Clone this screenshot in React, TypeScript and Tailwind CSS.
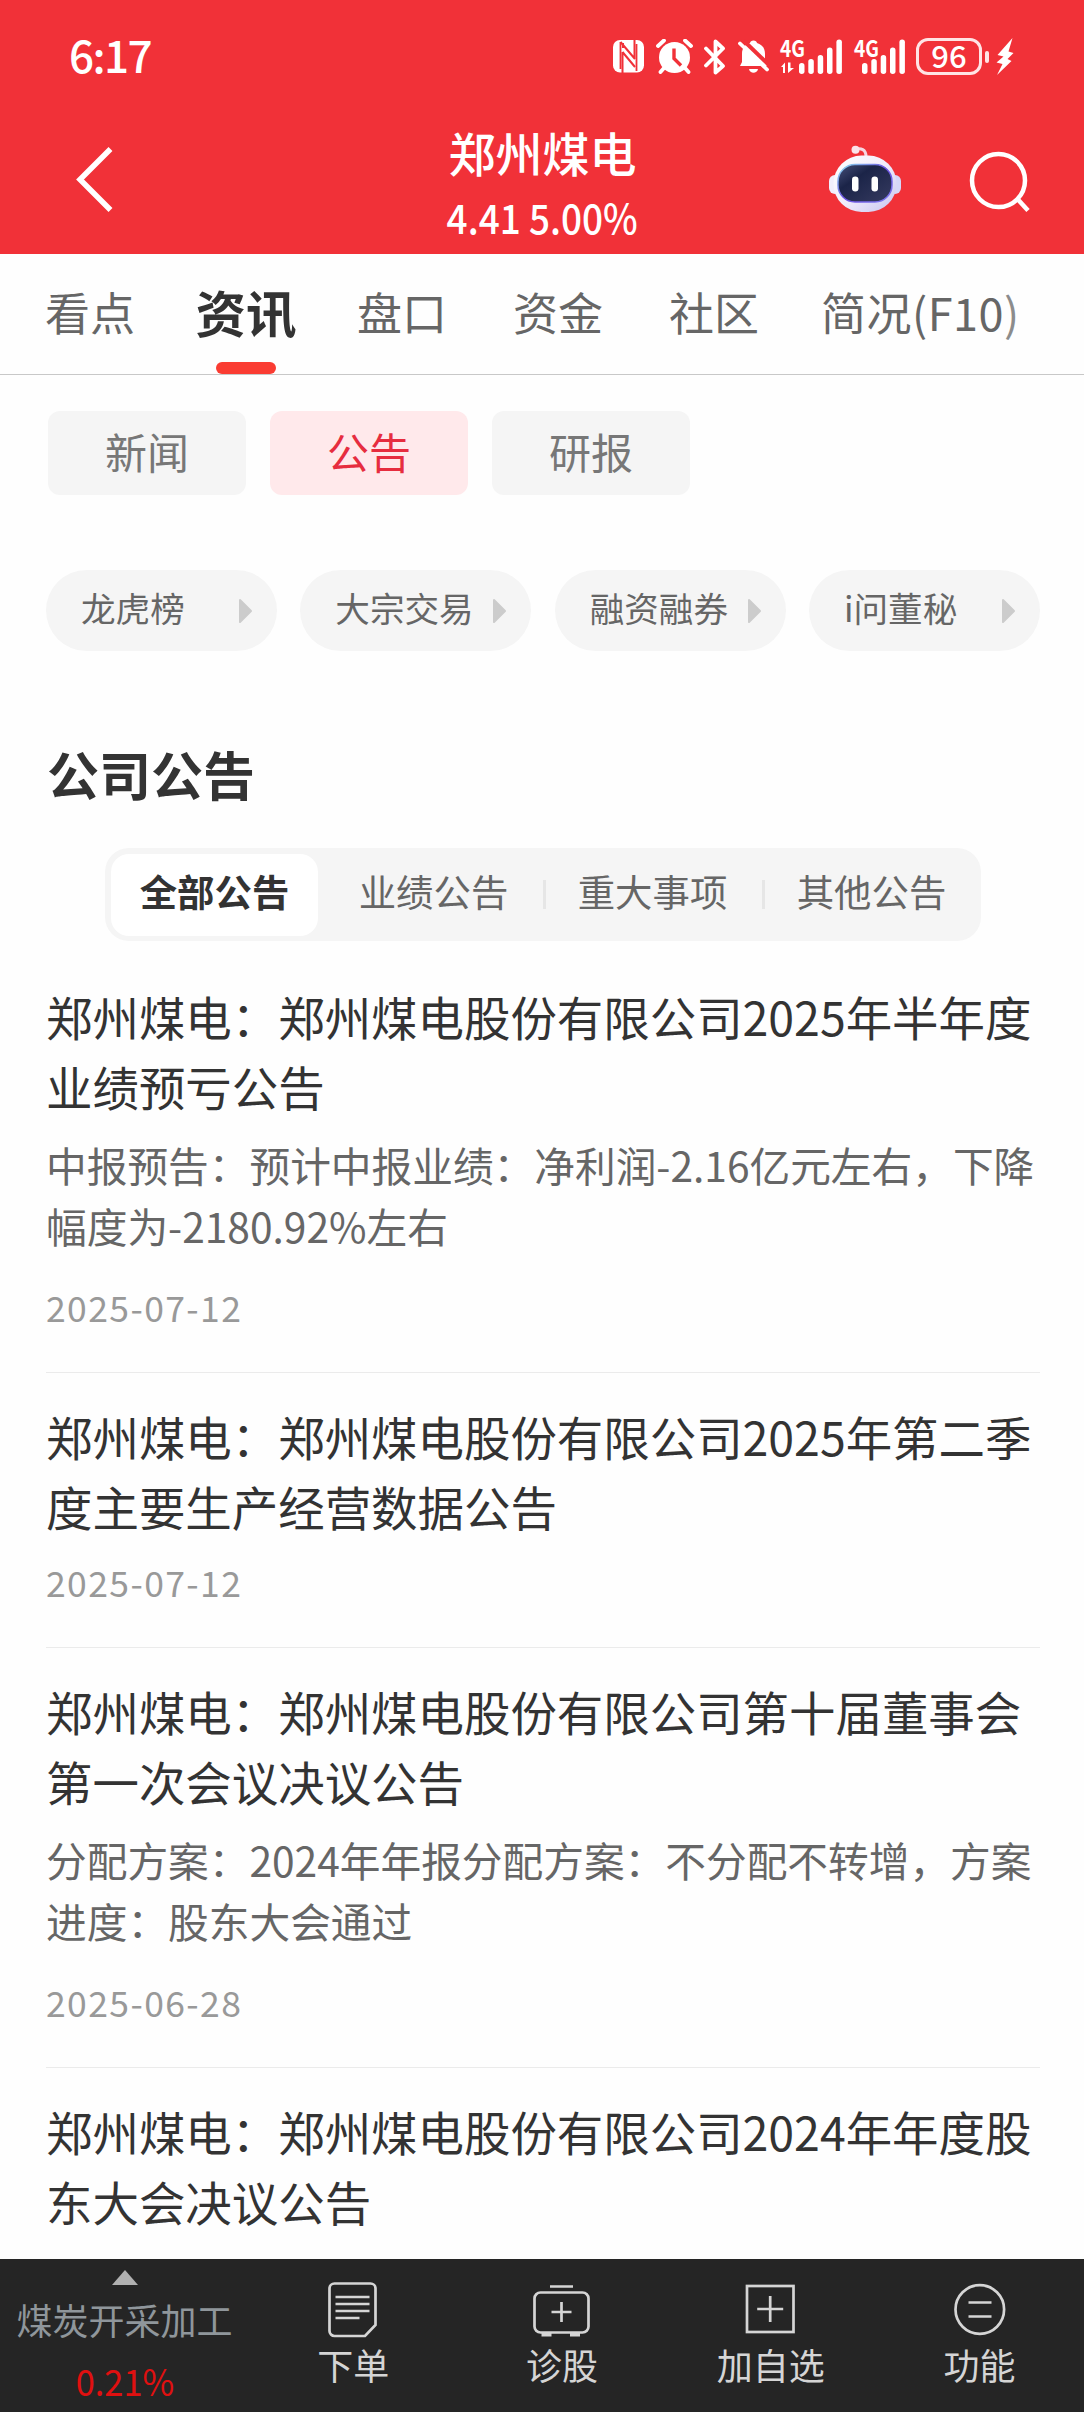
import type { ReactNode } from 'react';

interface Notice {
  lines: string[];
  desc?: string[];
  date?: string;
}

const tabs = ['看点', '资讯', '盘口', '资金', '社区'];
const chips = ['新闻', '公告', '研报'];
const shortcuts = ['龙虎榜', '大宗交易', '融资融券', 'i问董秘'];
const filters = ['全部公告', '业绩公告', '重大事项', '其他公告'];

const notices: Notice[] = [
  {
    lines: ['郑州煤电：郑州煤电股份有限公司2025年半年度', '业绩预亏公告'],
    desc: ['中报预告：预计中报业绩：净利润-2.16亿元左右，下降', '幅度为-2180.92%左右'],
    date: '2025-07-12',
  },
  {
    lines: ['郑州煤电：郑州煤电股份有限公司2025年第二季', '度主要生产经营数据公告'],
    date: '2025-07-12',
  },
  {
    lines: ['郑州煤电：郑州煤电股份有限公司第十届董事会', '第一次会议决议公告'],
    desc: ['分配方案：2024年年报分配方案：不分配不转增，方案', '进度：股东大会通过'],
    date: '2025-06-28',
  },
  {
    lines: ['郑州煤电：郑州煤电股份有限公司2024年年度股', '东大会决议公告'],
  },
];

const Signal = ({ data }: { data?: boolean }) => (
  <svg width="64" height="37" viewBox="0 0 64 37" fill="#fff" className="overflow-visible">
    <text
      x="0"
      y="19"
      fontSize="23"
      fontWeight="700"
      textLength="25"
      lengthAdjust="spacingAndGlyphs"
      fontFamily="Noto Sans CJK SC, sans-serif"
    >
      4G
    </text>
    {data && <path d="M5 35V24.500L1 29h2v6zM8 24.500v10.500l6-5h-3.500v-5.500z" />}
    <g transform={data ? 'translate(1.5 0)' : 'translate(-9.5 0)'}>
      <rect x="17.500" y="25" width="5.500" height="11" rx="2.700" />
      <rect x="26.800" y="21" width="5.500" height="15" rx="2.700" />
      <rect x="36.200" y="17" width="5.500" height="19" rx="2.700" />
      <rect x="45.500" y="9.500" width="5.500" height="26.500" rx="2.700" />
      <rect x="54.900" y="1.500" width="5.500" height="34.500" rx="2.700" />
    </g>
  </svg>
);

const StatusBar = () => (
  <div className="h-[113px] flex items-center justify-between pl-[69px] pr-[70px]">
    <span className="text-[44px] leading-[44px] -mt-[5px] font-medium tracking-[-1.600px]">6:17</span>
    <div className="flex items-center h-[37px]">
      <svg width="31" height="33" viewBox="0 0 31 33" className="mr-[12px]">
        <rect width="31" height="32.500" rx="7" fill="#fff" />
        <path d="M7.500 2l14.500 17M9.500 12l12.500 15M9.500 12v21M21.500 0v19M10 3v5" stroke="#f13138" strokeWidth="2" fill="none" />
        <path d="M7.500 2v27M23.500 4v27" stroke="#f13138" strokeWidth="1.800" />
      </svg>
      <svg width="37" height="35" viewBox="0 0 37 35" className="mr-[11px]">
        <circle cx="18.500" cy="18.500" r="15.500" fill="#fff" />
        <path d="M2 7l6-5.500M35 7l-6-5.500M8 29l-3.500 4M29 29l3.500 4" stroke="#fff" strokeWidth="3.800" strokeLinecap="round" />
        <path d="M18 9.500v10l7 7" stroke="#f13138" strokeWidth="3.400" fill="none" />
      </svg>
      <svg width="22" height="36" viewBox="0 0 22 36" className="mr-[12px]">
        <path d="M2 9.500l17 17.500-7.500 6.500V2.500L19 9.500 2 26.500" fill="none" stroke="#fff" strokeWidth="3.800" strokeLinejoin="round" strokeLinecap="round" />
      </svg>
      <svg width="31" height="35" viewBox="0 0 31 35" className="mr-[11px]">
        <path d="M15.500 1.500c2 0 3.200 1.200 3.500 2.500 5 1.500 8 5 8 11v8l2 4H2l2-4v-8c0-6 3-9.500 8-11 .3-1.300 1.500-2.500 3.500-2.500zM11 30h9c-.8 5-8.200 5-9 0z" fill="#fff" />
        <path d="M4 0l28 27" stroke="#f13138" strokeWidth="4" />
        <path d="M2 4.500l27 26" stroke="#fff" strokeWidth="3.800" strokeLinecap="round" />
      </svg>
      <Signal data />
      <div className="w-[10px]" />
      <Signal />
      <div className="flex items-center -ml-[2px]">
        <div className="w-[66px] h-[37px] rounded-[12px] border-[3px] border-[#ffe4e5] flex items-center justify-center">
          <span className="text-[31px] leading-[31px] -mt-[4px] font-medium">96</span>
        </div>
        <div className="w-[4px] h-[12px] rounded-full bg-[#ffe4e5] ml-[3px]" />
      </div>
      <svg width="18" height="37" viewBox="0 0 18 37" className="ml-[7px]" fill="#fff">
        <path d="M16.500 0L1.500 17l6 1.500-7 6 6 1.500L1 37 15.500 23l-4-2 6-6-5-1.500z" />
      </svg>
    </div>
  </div>
);

const Robot = () => (
  <svg width="72" height="68" viewBox="0 0 72 68">
    <defs>
      <linearGradient id="shell" x1="0" y1="0" x2="1" y2="1">
        <stop offset="0" stopColor="#fff" />
        <stop offset=".5" stopColor="#f1edfc" />
        <stop offset="1" stopColor="#c6c3ef" />
      </linearGradient>
      <linearGradient id="rim" x1="0" y1="0" x2="1" y2="1">
        <stop offset="0" stopColor="#8fe0ef" />
        <stop offset=".5" stopColor="#6a4fe0" />
        <stop offset="1" stopColor="#7f7bf0" />
      </linearGradient>
      <linearGradient id="visor" x1="0" y1="0" x2="1" y2="1">
        <stop offset="0" stopColor="#46507a" />
        <stop offset=".35" stopColor="#1b2448" />
        <stop offset="1" stopColor="#363b60" />
      </linearGradient>
    </defs>
    <path d="M26 4.500c6-2 11 0 11 7" fill="none" stroke="#f6d5e0" strokeWidth="3" />
    <circle cx="26.500" cy="4.800" r="4" fill="#fbe3ea" />
    <rect x="0" y="30" width="12" height="19" rx="6" fill="#f1eefc" />
    <rect x="60" y="30" width="12" height="19" rx="6" fill="#d6d7f8" />
    <rect x="4.500" y="10.500" width="63" height="56.500" rx="28" fill="url(#shell)" />
    <rect x="9" y="19.500" width="54" height="37.500" rx="17" fill="url(#visor)" stroke="url(#rim)" strokeWidth="1.500" />
    <rect x="23" y="31.500" width="6.500" height="15" rx="3.200" fill="#fff" />
    <rect x="42.500" y="31.500" width="6.500" height="15" rx="3.200" fill="#fff" />
  </svg>
);

const Header = () => (
  <header className="h-[254px] bg-[#f13138] text-white">
    <StatusBar />
    <div className="h-[141px] grid grid-cols-3 pl-[74px] pr-[51px]">
      <div className="pt-[32px]">
        <svg width="42" height="68" viewBox="0 0 42 68">
          <path d="M36.500 4L6 34.500 36.500 65" fill="none" stroke="#fff" strokeWidth="5.500" />
        </svg>
      </div>
      <div className="flex flex-col items-center -ml-[22px] pt-[14px]">
        <span className="text-[47px] leading-[50px] font-medium whitespace-nowrap">郑州煤电</span>
        <span className="text-[41px] leading-[44px] mt-[17px] font-medium whitespace-nowrap scale-x-[0.9]">4.41 5.00%</span>
      </div>
      <div className="flex justify-end items-start">
        <div className="pt-[32px] mr-[68px]">
          <Robot />
        </div>
        <svg width="64" height="64" viewBox="0 0 64 64" className="mt-[37px]" fill="none" stroke="#fff" strokeWidth="4.500">
          <circle cx="29.500" cy="30.500" r="26.500" />
          <path d="M48.500 49l10.500 11.500" />
        </svg>
      </div>
    </div>
  </header>
);

const Tabs = () => (
  <nav className="h-[121px] border-b border-[#c8c8c8] flex gap-[66px] pl-[45px] text-[45px] text-[#666] whitespace-nowrap">
    {tabs.map((tab) =>
      tab === '资讯' ? (
        <div key={tab} className="w-[90px] shrink-0 flex flex-col items-center justify-between">
          <span className="leading-[66px] pt-[24px] text-[50.500px] font-bold text-[#333]">{tab}</span>
          <div className="w-[60px] h-[12px] rounded-full bg-[#fa3c32]" />
        </div>
      ) : (
        <span key={tab} className="w-[90px] shrink-0 leading-[66px] pt-[25px]">{tab}</span>
      )
    )}
    <span className="leading-[66px] pt-[25px] -ml-[4px] tracking-[0.500px]">
      简况(F10<span className="text-[#8c8c8c]">)</span>
    </span>
  </nav>
);

const NoticeItem = ({ notice }: { notice: Notice }) => (
  <article className="border-b border-[#ebebeb] last:border-b-0 pt-[28px] whitespace-nowrap">
    <h3 className="text-[46.450px] leading-[70px] text-[#333]">
      {notice.lines.map((line) => (
        <div key={line}>{line}</div>
      ))}
    </h3>
    {notice.desc && (
      <p className="text-[40.700px] leading-[61px] text-[#666] mt-[13px] mb-[26px]">
        {notice.desc.map((line) => (
          <span key={line} className="block">{line}</span>
        ))}
      </p>
    )}
    {notice.date && (
      <div className={`text-[35.500px] leading-[50px] tracking-[1.400px] text-[#999] pb-[40px] ${notice.desc ? '' : 'mt-[16px]'}`}>
        {notice.date}
      </div>
    )}
  </article>
);

const BarItem = ({ label, children }: { label: string; children: ReactNode }) => (
  <div className="flex-1 flex flex-col items-center pt-[20px]">
    <svg width="60" height="60" viewBox="0 0 60 60" fill="none" stroke="#d5d5d5" strokeWidth="2.700">
      {children}
    </svg>
    <span className="text-[36px] leading-[44px] mt-[3px] text-[#d5d5d5]">{label}</span>
  </div>
);

const BottomBar = () => (
  <footer className="h-[153px] shrink-0 bg-[#252525] flex">
    <div className="w-[249px] flex flex-col items-center pt-[11px]">
      <svg width="26" height="15" viewBox="0 0 26 15">
        <path d="M13 0l13 15H0z" fill="#b0b0b0" />
      </svg>
      <span className="text-[36px] leading-[44px] mt-[12px] text-[#8f969b]">煤炭开采加工</span>
      <span className="text-[37px] leading-[44px] mt-[17px] text-[#e01010] scale-x-[0.93]">0.21%</span>
    </div>
    <BarItem label="下单">
      <path d="M11.500 4.500h36a5 5 0 0 1 5 5V46L42 57H11.500a5 5 0 0 1-5-5V9.500a5 5 0 0 1 5-5z" />
      <path d="M12.500 18h34M12.500 25h34M12.500 32h34M12.500 39h24" />
    </BarItem>
    <BarItem label="诊股">
      <rect x="2.500" y="13.500" width="54" height="40" rx="6" />
      <path d="M18 7.500h23M29.500 23v20M19.500 33h20" />
      <path d="M9.500 55.500h10M38 55.500h10" strokeWidth="4" />
    </BarItem>
    <BarItem label="加自选">
      <rect x="6" y="7" width="46.500" height="46" />
      <path d="M29.200 17v26M16.200 30h26" />
    </BarItem>
    <BarItem label="功能">
      <circle cx="29.800" cy="30.500" r="24.300" />
      <path d="M18.500 23.500h23M18.500 37.500h23" />
    </BarItem>
  </footer>
);

export default function App() {
  return (
    <div className="w-[1084px] h-[2412px] overflow-hidden flex flex-col bg-[#fefefe] font-['Noto_Sans_CJK_SC',sans-serif]">
      <Header />
      <Tabs />
      <main className="flex-1 min-h-0 overflow-hidden">
        <div className="flex gap-[24px] pl-[48px] pt-[36px]">
          {chips.map((chip) => (
            <div
              key={chip}
              className={`w-[198px] h-[84px] rounded-[12px] flex items-center justify-center pb-[5px] text-[42px] ${
                chip === '公告' ? 'bg-[#ffe9eb] text-[#e62d3f]' : 'bg-[#f5f5f5] text-[#777]'
              }`}
            >
              {chip}
            </div>
          ))}
        </div>
        <div className="flex justify-between pl-[46px] pr-[44px] mt-[75px]">
          {shortcuts.map((item) => (
            <div key={item} className="w-[231px] h-[81px] rounded-full bg-[#f5f5f5] flex items-center justify-between pl-[35px] pr-[25px]">
              <span className="text-[34.600px] leading-[50px] -mt-[8px] text-[#666]">{item}</span>
              <svg width="13" height="24" viewBox="0 0 13 24">
                <path d="M1 1l11 11L1 23z" fill="#ccc" stroke="#ccc" strokeWidth="2" strokeLinejoin="round" />
              </svg>
            </div>
          ))}
        </div>
        <h2 className="text-[52px] leading-[76px] font-bold text-[#333] pl-[47px] mt-[85px]">公司公告</h2>
        <div className="ml-[105px] w-[876px] h-[93px] rounded-[24px] bg-[#f5f5f5] flex mt-[36px]">
          {filters.map((f, i) => (
            <div key={f} className="flex-1 flex items-center">
              {i === 0 ? (
                <div className="w-[207px] h-[82px] mx-auto rounded-[18px] bg-white flex items-center justify-center text-[37.400px] font-bold text-[#333]">
                  <span className="-mt-[6px]">{f}</span>
                </div>
              ) : (
                <>
                  {i > 1 && <div className="w-[3px] h-[29px] bg-[#e6e6e6] -mr-[3px]" />}
                  <span className="flex-1 text-center text-[37.400px] -mt-[6px] text-[#666]">{f}</span>
                </>
              )}
            </div>
          ))}
        </div>
        <div className="pl-[46px] pr-[44px] mt-[12px]">
          {notices.map((n) => (
            <NoticeItem key={n.lines[0]} notice={n} />
          ))}
        </div>
      </main>
      <BottomBar />
    </div>
  );
}
